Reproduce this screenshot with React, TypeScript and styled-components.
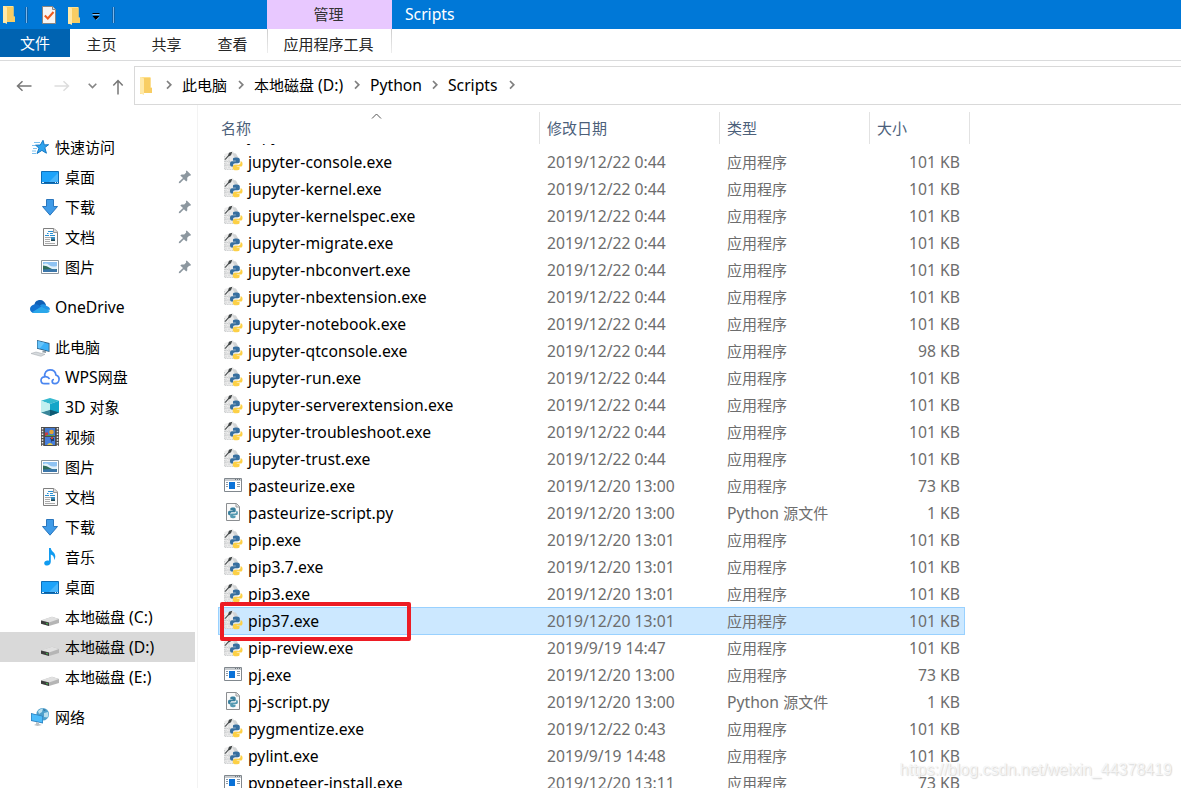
import React from "react";
import styled, { createGlobalStyle } from "styled-components";

const GlobalStyle = createGlobalStyle`
  * { box-sizing: border-box; }
  html, body { margin: 0; padding: 0; overflow: hidden; background: #fff; }
`;

const Window = styled.div`
  position: relative;
  display: flex;
  flex-direction: column;
  width: 1181px;
  height: 788px;
  overflow: hidden;
  background: #fff;
  color: #000;
  font: 15px/20px "Noto Sans", "Noto Sans CJK SC", sans-serif;
  white-space: pre;
`;

const Latin = styled.span`
  font-size: 15.7px;
`;

/* Han characters keep the base size, Latin runs are set slightly larger. */
const Label = ({ children }: { children: string }) => (
  <span>
    {children.split(/([\x20-\x7e]+)/).map((run, i) => (i % 2 ? <Latin key={i}>{run}</Latin> : run))}
  </span>
);

/* ---------- icons ---------- */

const Svg = styled.svg`
  display: block;
  flex: none;
`;

const FolderIcon = () => (
  <Svg width="12" height="18" viewBox="0 0 12 18">
    <path d="M0 0h10.500v10.500H12v5H4V17H0z" fill="#ffe08a" />
    <path d="M4 1h6.500v10H12v5H4z" fill="#f8cd63" />
    <path d="M0 0h1.500L4 2v16l-4-2z" fill="#ffe9a8" />
  </Svg>
);

const CheckNoteIcon = () => (
  <Svg width="14" height="18" viewBox="0 0 14 18">
    <path d="M.5.500h10l3 3v14H.5z" fill="#f7f5f3" stroke="#8b8580" />
    <path d="M10.500.500v3h3" fill="#ddd" stroke="#8b8580" />
    <path d="M2.800 9.500l3 3L11.500 6" fill="none" stroke="#f05a1c" strokeWidth="2" />
  </Svg>
);

const CustomizeIcon = () => (
  <Svg width="8" height="8" viewBox="0 0 8 8">
    <path d="M.500 0h7v1h-7z" fill="#000" />
    <path d="M.500 1h7v1h-7z" fill="#8fc4f0" />
    <path d="M.500 3h7L4 7z" fill="#000" />
    <path d="M4 7l3.500-3" stroke="#8fc4f0" strokeWidth=".7" />
  </Svg>
);

const ArrowIcon = ({ dir, color }: { dir: "left" | "right" | "up"; color: string }) => (
  <Svg width="16" height="16" viewBox="0 0 16 16">
    <path
      d="M15.500 8H1.500M6.500 3.300L1.500 8L6.500 12.700"
      fill="none"
      stroke={color}
      strokeWidth="1.500"
      transform={`rotate(${{ left: 0, right: 180, up: 90 }[dir]} 8 8)`}
    />
  </Svg>
);

const HistoryIcon = () => (
  <Svg width="9" height="6" viewBox="0 0 9 6">
    <path d="M.7.800l3.800 3.800L8.300.800" fill="none" stroke="#858585" strokeWidth="1.600" />
  </Svg>
);

const CrumbChevron = () => (
  <Svg width="6" height="12" viewBox="0 0 6 12">
    <path d="M1 1l3.800 3.800L1 8.600" fill="none" stroke="#808080" strokeWidth="1.700" />
  </Svg>
);

const SortIcon = () => (
  <Svg width="11" height="7" viewBox="0 0 11 7">
    <path d="M1 5.500L5.500 1L10 5.500" fill="none" stroke="#555" strokeWidth="1" />
  </Svg>
);

const PinIcon = () => (
  <Svg width="14" height="14" viewBox="0 0 14 14">
    <path
      d="M8.700.600l4.300 4.200-.9 1.100-.9-.1-2 2 .1 2.400-1 1.300L5.900 9.200 2.200 13l-1.400.2.200-1.500L5 8 2.300 5.600l1.300-1.200 2.600.1 2-2-.3-1.300z"
      fill="#8c979f"
    />
  </Svg>
);

const Box20 = ({ children }: { children: React.ReactNode }) => (
  <Svg width="20" height="20" viewBox="0 0 20 20">
    {children}
  </Svg>
);

const sideIcons: Record<string, React.ReactNode> = {
  star: (
    <Box20>
      <path d="M4 5.500h6M2 8.500h4M3 11.500h4M2 14h4M2 16.500h4" stroke="#7cc0ee" strokeWidth="1" />
      <path d="M13 3.300l1.300 4.600 4.300-.2-3.800 2.900 1.600 5.600-4.500-2.800-4.900 3.100 2-5.300-3.300-3 4.600-.2z" fill="#2fa4ee" stroke="#1578c4" strokeWidth="1" />
    </Box20>
  ),
  desktop: (
    <Box20>
      <path d="M1.500 4.500h17v12h-17z" fill="#1ea3fa" stroke="#0f6fb8" />
      <path d="M8 16L18 6v10z" fill="#48b5fb" />
      <path d="M1 15.500h18" stroke="#0b5d9e" />
      <path d="M2 15.500h2M15 15.500h1M17 15.500h1" stroke="#d8efff" />
    </Box20>
  ),
  download: (
    <Box20>
      <path d="M6.500 2.500h7v7h4L10 18.200 2.500 9.500h4z" fill="#3f9be8" stroke="#2a76bd" />
    </Box20>
  ),
  document: (
    <Box20>
      <path d="M3.500 1.500h10.500l3.500 3.500v13.500h-14z" fill="#fbfbfb" stroke="#7f7f7f" />
      <path d="M13.500 1.500v4h4" fill="#ddd" stroke="#999" />
      <path d="M8 4.500h5M7 6.500h1.500M10 6.500h3M5 8.500h4M10 8.500h5" stroke="#278fd2" />
      <path d="M5 10.500h10M5 12.500h5M5 14.500h5M5 16.500h10" stroke="#aaa" />
      <path d="M11 10h4v4h-4z" fill="#3a8bbd" />
      <path d="M11 12.500h4V14h-4z" fill="#234c58" />
    </Box20>
  ),
  picture: (
    <Box20>
      <path d="M1.500 3.500h17v13h-17z" fill="#fff" stroke="#8d969e" />
      <path d="M3 5h14v10H3z" fill="#8fc3f3" />
      <path d="M3 7.500q3-2 6 .5t8 1V12H3z" fill="#e2f1fb" />
      <path d="M3 8.500q4 .2 7 2.500t7 1V13H3z" fill="#2f6d5c" />
      <path d="M3 12.500q7-.8 14 0V15H3z" fill="#3a76aa" />
    </Box20>
  ),
  onedrive: (
    <Box20>
      <path d="M4.500 9C4 5 7 3 10 3s5 2 6 5l-6 6z" fill="#0f5fb5" />
      <path d="M4 7.500c3-1 5 .5 7 2.500l-5 6H4.500C1.500 16 0 14 0 12s1.500-4 4-4.500z" fill="#1372d0" />
      <path d="M10 8.500c2-2 5.500-1.500 6.500.5 2 .3 3.500 1.500 3.500 3.700l-7 .5z" fill="#1e93e6" />
      <path d="M2 15.200L11 9.700l8.800 4.100c-.5 1.500-1.600 2.200-3 2.200H4.500q-1.500 0-2.500-.8z" fill="#2aa7ea" />
    </Box20>
  ),
  computer: (
    <Box20>
      <path d="M7 3l12.500 3v9L7 11.800z" fill="#2d5d80" />
      <path d="M7.700 4l11 2.700v7.200L7.700 11z" fill="#3bb0f8" />
      <path d="M7.700 4l7 1.700-5 5.800-2-.5z" fill="#66c4fb" />
      <path d="M13 13.500l3 .8v1.800l-4-.8z" fill="#8d9aa3" />
      <path d="M1 16.500l5-1.500 9 2.300-4 2z" fill="#d5d9dc" stroke="#9fa5aa" strokeWidth=".5" />
    </Box20>
  ),
  wps: (
    <Box20>
      <path
        d="M9.500 16.700H4.500C2.300 16.700 1 15.200 1 13.300s1.500-3.500 3.600-3.500C4.300 5.500 6.500 2.900 10 2.900s5.600 2.200 5.900 5.100c2 .5 3.200 2 3.200 4.100 0 2.500-1.800 4.600-4.300 4.600M4.600 9.800c2-.3 4 .6 5 2.200M14.800 16.700c-1.800 0-2.600-1.200-2.600-2.400 0-1 .7-1.800 1.800-1.800"
        fill="none"
        stroke="#4a86f0"
        strokeWidth="1.700"
      />
    </Box20>
  ),
  cube: (
    <Box20>
      <path d="M10 1l9 2.700L10 7 1 3.700z" fill="#35b9cf" />
      <path d="M1 3.700L10 7v12l-9-3.500z" fill="#a5e5ea" />
      <path d="M19 3.700L10 7v12l9-3.500z" fill="#12a5c8" />
      <path d="M1 15.500l9-2.800 9 2.800L10 19z" fill="#15647c" opacity=".75" />
      <path d="M10 12.700l9 2.800L10 19z" fill="#0b4e67" opacity=".7" />
      <path d="M1 3.700L10 7v5.700l-9 2.800z" fill="#c2f0f0" />
    </Box20>
  ),
  video: (
    <Box20>
      <path d="M1 0h18v19H1z" fill="#4c4c4c" />
      <path d="M5 1h10v8H5z" fill="#4279d0" />
      <path d="M5 10h10v8H5z" fill="#467edb" />
      <path d="M2.500 1v18M17.500 1v18" stroke="#eee" strokeWidth="1.500" strokeDasharray="1.500 1.300" />
      <path d="M5 5.500h3V9H5z" fill="#c83d42" />
      <circle cx="11.500" cy="5" r="2.300" fill="#e2a335" />
      <path d="M6 8h8v1H6z" fill="#4ea34c" />
      <path d="M10 11h4v3h-2v2z" fill="#233d68" />
      <path d="M11 10h2v2h-2z" fill="#c74539" />
      <path d="M7 18q3-4 6 0z" fill="#e9cd45" />
    </Box20>
  ),
  music: (
    <Box20>
      <path
        d="M9 1h1.800c.3 3.700 4.500 4.300 4.500 8.200 0 1.600-.5 2.700-1.300 3.800.4-3-.8-4.800-3.200-5.500v7.300c0 2.300-1.700 3.700-3.700 3.700-1.700 0-2.900-.9-2.900-2.300 0-1.700 1.600-2.700 3.200-2.700.6 0 1.100.1 1.600.3z"
        fill="#109bf0"
      />
    </Box20>
  ),
  drive: (
    <Box20>
      <path d="M1 13.500L12 9.800l7 2.200v4L9 19 1 16.500z" fill="#b5b5b5" />
      <path d="M1 13.300L12 9.800l7 2.200-10 3.500z" fill="#e0e0e0" />
      <path d="M1 13.400l8 2.200V19l-8-2.300z" fill="#3d3d3d" />
      <path d="M6.300 15.800l1.400.4v1.300l-1.400-.4z" fill="#45d252" />
    </Box20>
  ),
  network: (
    <Box20>
      <circle cx="12.700" cy="7.300" r="6.300" fill="#4d9fcb" />
      <path d="M8 4q3-3 5-2.500L12 5l-3 2zM14 6l4-1q1 3-.5 5.500L14 10z" fill="#b9dfee" />
      <path d="M13 2l3 1-2 1z" fill="#2c6f9c" />
      <path d="M1 6l12 3v7.500L1 14z" fill="#2b7fbd" />
      <path d="M1.700 6.900l10.600 2.700v6L1.700 13.300z" fill="#4dbcfa" />
      <path d="M6 15l3 .8V17l3 1-4.500 1L4 18l2-1z" fill="#b9c1c6" />
    </Box20>
  ),
};

const PY_BLUE =
  "M4.700 0C2.700 0 2.600.900 2.600 1.900v1.200h2.500v.5H1.700C.600 3.600 0 4.500 0 6s.600 2.500 1.700 2.500h1V7c0-1 .800-1.700 1.800-1.700h2.600c.9 0 1.500-.6 1.500-1.500V1.900C8.600.700 7.500 0 5.900 0z";
const PY_YELLOW =
  "M6.300 12c2 0 2.100-.9 2.100-1.900V8.900H5.900v-.5h3.400C10.400 8.400 11 7.500 11 6S10.400 3.500 9.300 3.500h-.1V5c0 1-.8 1.700-1.800 1.700H4.800c-.9 0-2.400.6-2.400 1.500v1.900C2.400 11.300 3.500 12 5.100 12z";

const fileIcons: Record<string, React.ReactNode> = {
  pyexe: (
    <Box20>
      <path d="M1.500 3L10 .500 14.500 6v12.500H1.500z" fill="#ececec" />
      <path d="M1.500 5v13.500H12M3 7v11M1.500 10.500h6M1.500 14h6M6 4v14" fill="none" stroke="#c4c7c8" strokeWidth=".8" strokeDasharray="1.500 .8" />
      <path d="M9 2l4 .5 2.500 4.500-4-.5z" fill="#d3d5d6" />
      <path d="M1.500 8.500L5 4.500l1-2.700L9.300.800 8 4.200 5.500 5.500 2.500 8.700z" fill="#3f4445" />
      <g transform="translate(7 6.500) scale(1.140 1.070)">
        <path d={PY_YELLOW} fill="#fcd046" />
        <path d={PY_BLUE} fill="#376f9f" />
      </g>
    </Box20>
  ),
  app: (
    <Box20>
      <path d="M1.500 3.500h17v13h-17z" fill="#fff" stroke="#81888e" />
      <path d="M2 4h16v2H2z" fill="#c8ccd0" />
      <path d="M12 4.500h1M14 4.500h1M16 4.500h1" stroke="#6f777e" />
      <path d="M6 7h6v7H6z" fill="#0a72d8" />
      <path d="M3 7.500h2M3 9.500h2M3 11.500h2M14 7.500h3M14 9.500h3M14 11.500h3" stroke="#8d9aa6" />
    </Box20>
  ),
  py: (
    <Box20>
      <path d="M3.500 1.500h10l3 3v14h-13z" fill="#fafafa" stroke="#8b8e91" />
      <path d="M13 1.500v3.500h3.500" fill="#e6e6e6" stroke="#9a9d9f" />
      <g transform="translate(5 5.500) scale(.9)">
        <path d={PY_YELLOW} fill="#559ab2" />
        <path d={PY_BLUE} fill="#397f9d" />
      </g>
    </Box20>
  ),
};

/* ---------- title bar and ribbon ---------- */

const TitleBar = styled.header`
  display: flex;
  flex: none;
  height: 29px;
  background: #0078d7;
  color: #fff;
`;

const QuickAccess = styled.div`
  display: flex;
  width: 267px;
  padding: 6px 0 0 3px;
`;

const QuickItem = styled.div<{ $gap: number; $top?: number }>`
  margin-left: ${(p) => p.$gap}px;
  margin-top: ${(p) => p.$top ?? 0}px;
`;

const QuickDivider = styled.div<{ $gap: number }>`
  width: 3px;
  height: 16px;
  margin: 1px 0 0 ${(p) => p.$gap}px;
  background: #7ab6ea;
  border: solid #0d62ab;
  border-width: 0 1px;
`;

const ContextGroup = styled.div`
  width: 125px;
  padding: 4px 2px 0 0;
  background: #e8c8ff;
  color: #333;
  text-align: center;
`;

const Title = styled.div`
  padding: 4px 0 0 13px;
`;

const Ribbon = styled.nav`
  display: flex;
  flex: none;
  height: 32px;
  border-bottom: 1px solid #dadbdc;
  color: #262626;
`;

const Tab = styled.div<{ $width: number; $active?: boolean }>`
  width: ${(p) => p.$width}px;
  height: 28px;
  padding: ${(p) => (p.$active ? "4px 0 0" : "5px 2px 0 0")};
  text-align: center;
  background: ${(p) => (p.$active ? "#0063b1" : "transparent")};
  color: ${(p) => (p.$active ? "#fff" : "inherit")};
`;

const ContextTab = styled(Tab)`
  height: 24px;
  border: solid;
  border-width: 0 1px;
  border-image: linear-gradient(#ccc, #eee) 1;
`;

/* ---------- address bar ---------- */

const AddressRow = styled.div`
  display: flex;
  flex: none;
  height: 44px;
  padding-top: 5px;
`;

const NavButtons = styled.div`
  display: flex;
  align-items: center;
  width: 134px;
  padding-left: 16px;
`;

const NavItem = styled.div<{ $gap: number; $drop?: number }>`
  margin-left: ${(p) => p.$gap}px;
  padding-top: ${(p) => p.$drop ?? 0}px;
`;

const AddressBox = styled.div`
  display: flex;
  flex: 1;
  align-items: center;
  border: 1px solid #d9d9d9;
  border-right: 0;
  padding-left: 5px;
`;

const Crumb = styled.div<{ $width: number }>`
  width: ${(p) => p.$width}px;
  margin: 0 12px 0 10px;
  padding-bottom: 2px;
`;

const CrumbStart = styled.div`
  width: 14px;
  margin-right: 12px;
`;

/* ---------- body ---------- */

const Body = styled.main`
  display: flex;
  flex: 1;
  min-height: 0;
`;

const Sidebar = styled.aside`
  width: 198px;
  padding-top: 27px;
  border-right: 1px solid #f3f3f3;
`;

const SideGroup = styled.section`
  margin-bottom: 10px;
`;

const SideItem = styled.div<{ $root?: boolean; $selected?: boolean }>`
  display: flex;
  align-items: center;
  gap: 5px;
  width: 195px;
  height: 30px;
  padding: 0 3px 0 ${(p) => (p.$root ? 30 : 40)}px;
  background: ${(p) => (p.$selected ? "#d9d9d9" : "transparent")};
`;

const PinSlot = styled.div`
  margin-left: auto;
`;

const Files = styled.section`
  display: flex;
  flex: 1;
  flex-direction: column;
  padding-left: 20px;
`;

const HeaderRow = styled.div`
  display: flex;
  flex: none;
  height: 39px;
  padding-top: 7px;
  color: #4c607a;
`;

const HeaderCell = styled.div<{ $width: number }>`
  display: flex;
  width: ${(p) => p.$width}px;
  height: 32px;
  padding: 6px 0 0 7px;
  border-right: 1px solid #e2e2e2;
`;

const NameHeader = styled(HeaderCell)`
  padding-left: 3px;
`;

const SortMark = styled.div`
  margin: -5px 0 0 120px;
`;

const Rows = styled.div`
  flex: 1;
  min-height: 0;
  overflow: hidden;
`;

const RowTrack = styled.div`
  margin-top: -23px;
`;

const Row = styled.div<{ $selected?: boolean }>`
  display: flex;
  width: 747px;
  height: ${(p) => (p.$selected ? 28 : 27)}px;
  margin-bottom: ${(p) => (p.$selected ? -1 : 0)}px;
  color: #6d6d6d;
  background: ${(p) => (p.$selected ? "#cce8ff" : "transparent")};
  box-shadow: ${(p) => (p.$selected ? "inset 0 0 0 1px #99d1ff" : "none")};
`;

const NameCell = styled.div`
  display: flex;
  gap: 5px;
  width: 329px;
  padding: 3px 0 0 5px;
  color: #000;
`;

const NameText = styled.div`
  padding-top: 1px;
  letter-spacing: 0.04px;
`;

const Cell = styled.div<{ $width: number; $right?: boolean }>`
  width: ${(p) => p.$width}px;
  padding-top: 4px;
  text-align: ${(p) => (p.$right ? "right" : "left")};
`;

const Highlight = styled.div`
  position: absolute;
  left: 220px;
  top: 602px;
  width: 191px;
  height: 39px;
  border: 4px solid #ed1c24;
  border-radius: 2px;
`;

const Watermark = styled.div`
  position: absolute;
  right: 9px;
  bottom: 8px;
  color: rgba(255, 255, 255, 0.75);
  font: 16px/20px "Liberation Sans", sans-serif;
  text-shadow: 0 0 1px rgba(0, 0, 0, 0.12), 1px 1px 1px rgba(0, 0, 0, 0.13);
`;

type Item = { icon: string; text: string; root?: boolean; pin?: boolean; selected?: boolean };

const groups: Item[][] = [
  [
    { icon: "star", text: "快速访问", root: true },
    { icon: "desktop", text: "桌面", pin: true },
    { icon: "download", text: "下载", pin: true },
    { icon: "document", text: "文档", pin: true },
    { icon: "picture", text: "图片", pin: true },
  ],
  [{ icon: "onedrive", text: "OneDrive", root: true }],
  [
    { icon: "computer", text: "此电脑", root: true },
    { icon: "wps", text: "WPS网盘" },
    { icon: "cube", text: "3D 对象" },
    { icon: "video", text: "视频" },
    { icon: "picture", text: "图片" },
    { icon: "document", text: "文档" },
    { icon: "download", text: "下载" },
    { icon: "music", text: "音乐" },
    { icon: "desktop", text: "桌面" },
    { icon: "drive", text: "本地磁盘 (C:)" },
    { icon: "drive", text: "本地磁盘 (D:)", selected: true },
    { icon: "drive", text: "本地磁盘 (E:)" },
  ],
  [{ icon: "network", text: "网络", root: true }],
];

const APP = "应用程序";
const PY = "Python 源文件";

const files: [string, string, string, string, string][] = [
  ["pyexe", "jupyter.exe", "", "", ""],
  ["pyexe", "jupyter-console.exe", "2019/12/22 0:44", APP, "101 KB"],
  ["pyexe", "jupyter-kernel.exe", "2019/12/22 0:44", APP, "101 KB"],
  ["pyexe", "jupyter-kernelspec.exe", "2019/12/22 0:44", APP, "101 KB"],
  ["pyexe", "jupyter-migrate.exe", "2019/12/22 0:44", APP, "101 KB"],
  ["pyexe", "jupyter-nbconvert.exe", "2019/12/22 0:44", APP, "101 KB"],
  ["pyexe", "jupyter-nbextension.exe", "2019/12/22 0:44", APP, "101 KB"],
  ["pyexe", "jupyter-notebook.exe", "2019/12/22 0:44", APP, "101 KB"],
  ["pyexe", "jupyter-qtconsole.exe", "2019/12/22 0:44", APP, "98 KB"],
  ["pyexe", "jupyter-run.exe", "2019/12/22 0:44", APP, "101 KB"],
  ["pyexe", "jupyter-serverextension.exe", "2019/12/22 0:44", APP, "101 KB"],
  ["pyexe", "jupyter-troubleshoot.exe", "2019/12/22 0:44", APP, "101 KB"],
  ["pyexe", "jupyter-trust.exe", "2019/12/22 0:44", APP, "101 KB"],
  ["app", "pasteurize.exe", "2019/12/20 13:00", APP, "73 KB"],
  ["py", "pasteurize-script.py", "2019/12/20 13:00", PY, "1 KB"],
  ["pyexe", "pip.exe", "2019/12/20 13:01", APP, "101 KB"],
  ["pyexe", "pip3.7.exe", "2019/12/20 13:01", APP, "101 KB"],
  ["pyexe", "pip3.exe", "2019/12/20 13:01", APP, "101 KB"],
  ["pyexe", "pip37.exe", "2019/12/20 13:01", APP, "101 KB"],
  ["pyexe", "pip-review.exe", "2019/9/19 14:47", APP, "101 KB"],
  ["app", "pj.exe", "2019/12/20 13:00", APP, "73 KB"],
  ["py", "pj-script.py", "2019/12/20 13:00", PY, "1 KB"],
  ["pyexe", "pygmentize.exe", "2019/12/22 0:43", APP, "101 KB"],
  ["pyexe", "pylint.exe", "2019/9/19 14:48", APP, "101 KB"],
  ["app", "pyppeteer-install.exe", "2019/12/20 13:11", APP, "73 KB"],
];

const crumbs: [string, number][] = [
  ["此电脑", 44],
  ["本地磁盘 (D:)", 88],
  ["Python", 50],
  ["Scripts", 49],
];

export default function App() {
  return (
    <Window>
      <GlobalStyle />
      <TitleBar>
        <QuickAccess>
          <QuickItem $gap={0}><FolderIcon /></QuickItem>
          <QuickDivider $gap={10} />
          <QuickItem $gap={14}><CheckNoteIcon /></QuickItem>
          <QuickItem $gap={12} $top={1}><FolderIcon /></QuickItem>
          <QuickItem $gap={12} $top={7}><CustomizeIcon /></QuickItem>
          <QuickDivider $gap={12} />
        </QuickAccess>
        <ContextGroup>管理</ContextGroup>
        <Title><Label>Scripts</Label></Title>
      </TitleBar>
      <Ribbon>
        <Tab $width={70} $active>文件</Tab>
        <Tab $width={65}>主页</Tab>
        <Tab $width={65}>共享</Tab>
        <Tab $width={67}>查看</Tab>
        <ContextTab $width={125}>应用程序工具</ContextTab>
      </Ribbon>
      <AddressRow>
        <NavButtons>
          <NavItem $gap={0}><ArrowIcon dir="left" color="#777" /></NavItem>
          <NavItem $gap={22}><ArrowIcon dir="right" color="#ddd" /></NavItem>
          <NavItem $gap={18}><HistoryIcon /></NavItem>
          <NavItem $gap={13} $drop={3}><ArrowIcon dir="up" color="#777" /></NavItem>
        </NavButtons>
        <AddressBox>
          <CrumbStart><FolderIcon /></CrumbStart>
          <CrumbChevron />
          {crumbs.map(([text, width]) => (
            <React.Fragment key={text}>
              <Crumb $width={width}><Label>{text}</Label></Crumb>
              <CrumbChevron />
            </React.Fragment>
          ))}
        </AddressBox>
      </AddressRow>
      <Body>
        <Sidebar>
          {groups.map((items, g) => (
            <SideGroup key={g}>
              {items.map((item) => (
                <SideItem key={item.text} $root={item.root} $selected={item.selected}>
                  {sideIcons[item.icon]}
                  <Label>{item.text}</Label>
                  {item.pin && <PinSlot><PinIcon /></PinSlot>}
                </SideItem>
              ))}
            </SideGroup>
          ))}
        </Sidebar>
        <Files>
          <HeaderRow>
            <NameHeader $width={322}>
              名称
              <SortMark><SortIcon /></SortMark>
            </NameHeader>
            <HeaderCell $width={180}>修改日期</HeaderCell>
            <HeaderCell $width={150}>类型</HeaderCell>
            <HeaderCell $width={100}>大小</HeaderCell>
          </HeaderRow>
          <Rows>
            <RowTrack>
              {files.map(([icon, name, date, type, size]) => (
                <Row key={name} $selected={name === "pip37.exe"}>
                  <NameCell>
                    {fileIcons[icon]}
                    <NameText><Label>{name}</Label></NameText>
                  </NameCell>
                  <Cell $width={180}><Label>{date}</Label></Cell>
                  <Cell $width={150}><Label>{type}</Label></Cell>
                  <Cell $width={83} $right><Label>{size}</Label></Cell>
                </Row>
              ))}
            </RowTrack>
          </Rows>
        </Files>
      </Body>
      <Highlight />
      <Watermark>https://blog.csdn.net/weixin_44378419</Watermark>
    </Window>
  );
}
